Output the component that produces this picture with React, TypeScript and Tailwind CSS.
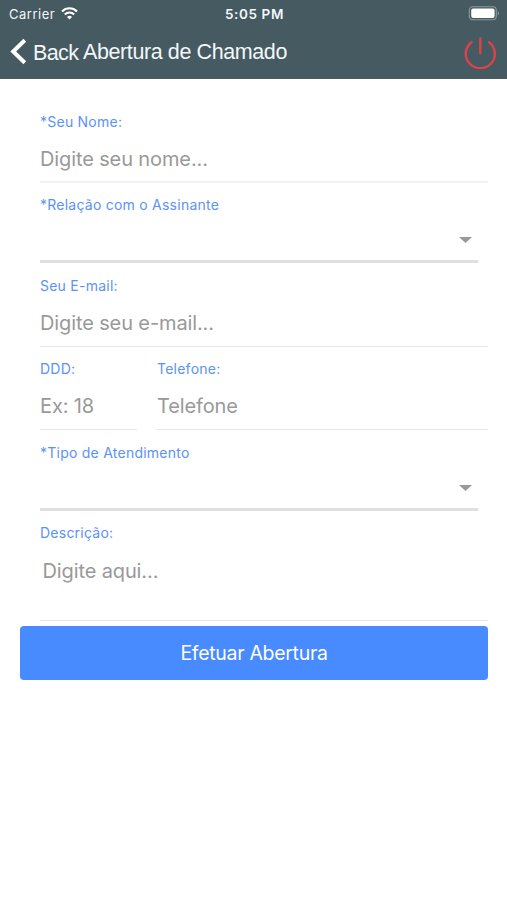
import type { ReactNode } from 'react';
import { clsx } from 'clsx';

interface FieldProps {
    label: string;
    className?: string;
    children: ReactNode;
}

const Field = ({ label, className, children }: FieldProps) => (
    <label className={clsx('block', className)}>
        <span className="block h-5 text-sm leading-5 tracking-[0.24px] whitespace-nowrap text-[#5b92f8]">{label}</span>
        {children}
    </label>
);

interface TextFieldProps {
    label: string;
    placeholder: string;
    className?: string;
}

const TextField = ({ label, placeholder, className }: TextFieldProps) => (
    <Field label={label} className={className}>
        <input
            type="text"
            placeholder={placeholder}
            className="mt-[14px] block h-[27px] w-full text-xl leading-[27px] tracking-[-0.12px] outline-none placeholder:text-[#999]"
        />
    </Field>
);

const SelectField = ({ label, className }: { label: string; className?: string }) => (
    <Field label={label} className={clsx('mr-2.5 border-b-[3px] border-[#dfdfdf]', className)}>
        <span className="flex h-11 items-center justify-end pt-[6px] pr-[6px]">
            <svg width="13" height="6" viewBox="0 0 13 6" fill="#999">
                <path d="M0 0h13L6.5 6z" />
            </svg>
        </span>
    </Field>
);

const StatusBar = () => (
    <div className="flex h-[27px] items-center pr-[7px] pl-[9px]">
        <div className="flex flex-1 items-center gap-[6px]">
            <span className="pt-0.5 text-[13px] tracking-[0.5px]">Carrier</span>
            <svg width="17" height="13" viewBox="0 0 17 13" fill="none" stroke="#fff" strokeWidth="2.1">
                <path d="M1 4.4a10.6 10.6 0 0 1 15 0" />
                <path d="M3.8 7.4a6.6 6.6 0 0 1 9.4 0" />
                <path d="M8.5 12.4 6 9.9a3.6 3.6 0 0 1 5 0z" fill="#fff" stroke="none" />
            </svg>
        </div>
        <span className="pt-0.5 text-[13.5px] font-semibold tracking-[0.6px]">5:05 PM</span>
        <div className="flex flex-1 justify-end">
            <svg width="32" height="15" viewBox="0 0 32 15">
                <rect x="1.3" y="0.8" width="27" height="13" rx="3.5" fill="none" stroke="#8b999f" strokeWidth="1.1" />
                <rect x="3.2" y="2.6" width="23.4" height="9.4" rx="2" fill="#fff" />
                <path d="M29.7 5.2c1.7.6 1.7 3.6 0 4.2z" fill="#8b999f" />
            </svg>
        </div>
    </div>
);

const NavBar = () => (
    <div className="flex h-[52px] items-center pr-[11px] pl-[10px] font-['Liberation_Sans',sans-serif] text-[21.5px] tracking-[-0.4px]">
        <svg width="17" height="27" viewBox="0 0 17 27" className="-mt-1" fill="none" stroke="#fff" strokeWidth="4">
            <path d="M14.8 2.2 3.2 13.5l11.6 11.3" />
        </svg>
        <span className="ml-[6px] w-[50px] tracking-[-0.6px]">Back</span>
        <h1 className="-mt-0.5 flex-1 whitespace-nowrap">Abertura de Chamado</h1>
        <svg width="32" height="32" viewBox="0 0 32 32" fill="none" stroke="#dc4249" strokeWidth="2.4" strokeLinecap="round">
            <path d="M16.3 1.5V16" />
            <path d="M7.5 5.2a14.5 14.5 0 1 0 17.6 0" />
        </svg>
    </div>
);

export default function App() {
    return (
        <div className="min-h-screen bg-white font-['Inter',sans-serif]">
            <header className="h-[79px] bg-[#465a62] text-[#f2f7fa]">
                <StatusBar />
                <NavBar />
            </header>
            <main className="pt-5 pr-[19px] pl-10">
                <TextField
                    label="*Seu Nome:"
                    placeholder="Digite seu nome..."
                    className="h-[84px] border-b-2 border-[#f1f1f1] pt-[13px]"
                />
                <SelectField label="*Relação com o Assinante" className="h-20 pt-3" />
                <TextField
                    label="Seu E-mail:"
                    placeholder="Digite seu e-mail..."
                    className="h-[84px] border-b border-[#e6e6e6] pt-[13px]"
                />
                <div className="flex gap-5">
                    <TextField label="DDD:" placeholder="Ex: 18" className="h-[83px] w-[97px] border-b border-[#e6e6e6] pt-3" />
                    <TextField label="Telefone:" placeholder="Telefone" className="h-[83px] flex-1 border-b border-[#e6e6e6] pt-3" />
                </div>
                <SelectField label="*Tipo de Atendimento" className="h-[81px] pt-[13px]" />
                <Field label="Descrição:" className="h-[110px] border-b border-[#e6e6e6] pt-3">
                    <textarea
                        placeholder="Digite aqui..."
                        className="mt-[15px] block h-[58px] w-full resize-none pl-[2.5px] text-xl leading-[27px] tracking-[-0.12px] outline-none placeholder:text-[#999]"
                    />
                </Field>
                <button className="mt-[5px] -ml-5 block h-[54px] w-[468px] rounded-[4px] bg-[#488aff] pt-px text-[19.5px] tracking-[-0.3px] text-white">
                    Efetuar Abertura
                </button>
            </main>
        </div>
    );
}
